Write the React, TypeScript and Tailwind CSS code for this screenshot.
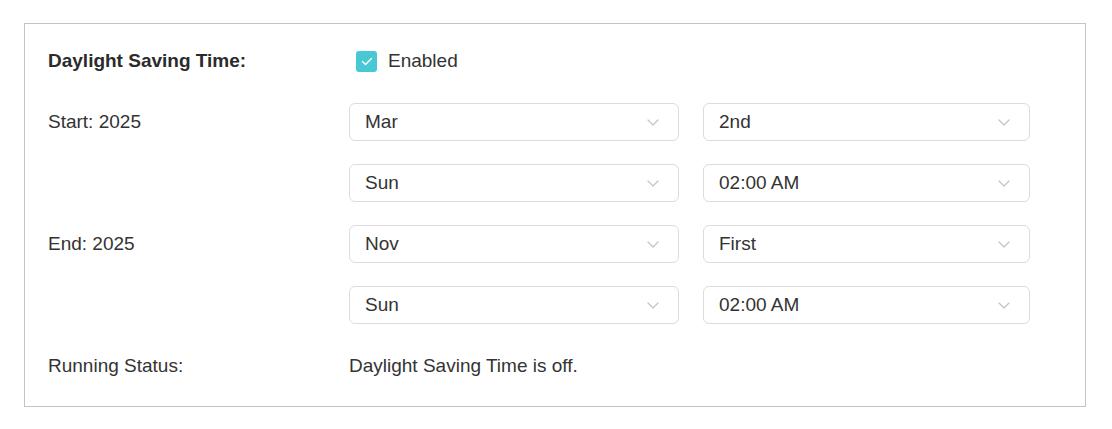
import React from 'react';

const Chevron = () => (
  <svg width="12" height="7" viewBox="0 0 12 7" fill="none" className="shrink-0">
    <path d="M1 1l5 5 5-5" stroke="#c4c4c4" strokeWidth="1.3" strokeLinecap="round" strokeLinejoin="round" />
  </svg>
);

const Select = ({ value, wide }: { value: string; wide?: boolean }) => (
  <div
    className={`flex h-[38px] items-center justify-between rounded-[6px] border border-[#dcdcdc] bg-white pl-[15px] pr-[19px] ${
      wide ? 'w-[330px]' : 'w-[327px]'
    }`}
  >
    <span>{value}</span>
    <Chevron />
  </div>
);

const Row = ({ label, children, bold }: { label?: string; children: React.ReactNode; bold?: boolean }) => (
  <div className="flex h-[38px] items-center">
    <div className={`w-[301px] shrink-0 ${bold ? 'font-bold text-[#2b2b2b]' : ''}`}>{label}</div>
    {children}
  </div>
);

const Pair = ({ a, b }: { a: string; b: string }) => (
  <div className="flex gap-[24px]">
    <Select value={a} wide />
    <Select value={b} />
  </div>
);

export default function App() {
  return (
    <div className="min-h-screen bg-white pl-[24px] pt-[23px] text-[19px] text-[#333] [font-family:'Liberation_Sans',Arial,sans-serif]">
      <div className="flex h-[384px] w-[1062px] flex-col gap-[23px] border border-[#c4c4c4] pl-[23px] pt-[18px]">
        <Row label="Daylight Saving Time:" bold>
          <div className="flex items-center gap-[11px] pl-[7px]">
            <div className="flex h-[21px] w-[21px] items-center justify-center rounded-[3px] bg-[#47c8d3]">
              <svg width="12" height="9" viewBox="0 0 12 9" fill="none">
                <path d="M1.5 4.5l3 3 6-6" stroke="#fff" strokeWidth="1.4" strokeLinecap="round" strokeLinejoin="round" />
              </svg>
            </div>
            <span>Enabled</span>
          </div>
        </Row>
        <Row label="Start: 2025">
          <Pair a="Mar" b="2nd" />
        </Row>
        <Row>
          <Pair a="Sun" b="02:00 AM" />
        </Row>
        <Row label="End: 2025">
          <Pair a="Nov" b="First" />
        </Row>
        <Row>
          <Pair a="Sun" b="02:00 AM" />
        </Row>
        <Row label="Running Status:">
          <span>Daylight Saving Time is off.</span>
        </Row>
      </div>
    </div>
  );
}
